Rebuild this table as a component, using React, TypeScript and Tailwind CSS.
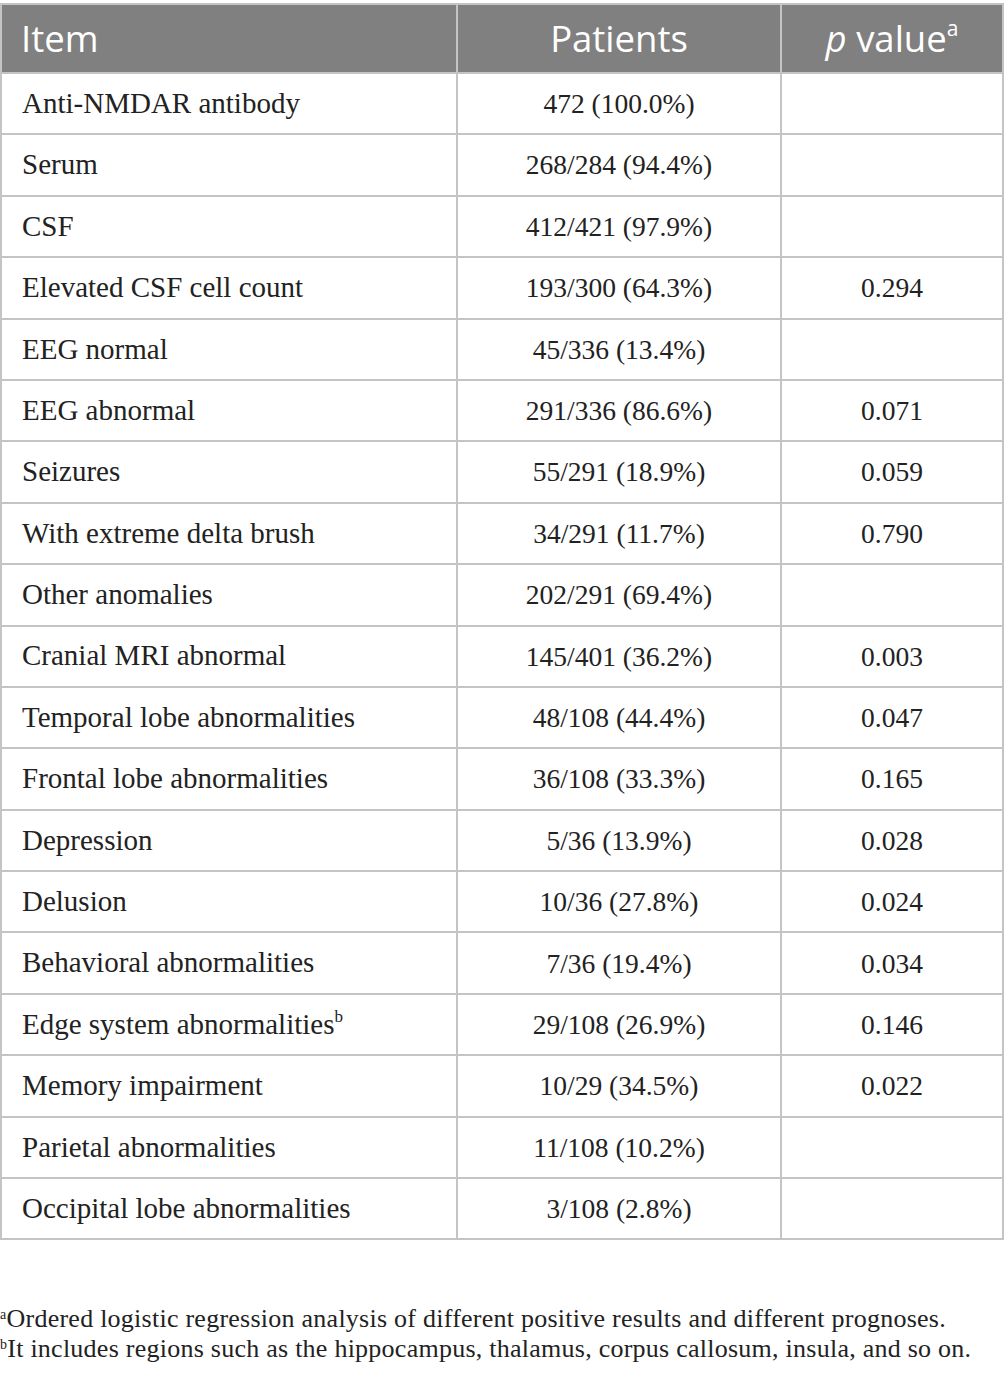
const rows: [string, string, string, string?][] = [
  ['Anti-NMDAR antibody', '472 (100.0%)', ''],
  ['Serum', '268/284 (94.4%)', ''],
  ['CSF', '412/421 (97.9%)', ''],
  ['Elevated CSF cell count', '193/300 (64.3%)', '0.294'],
  ['EEG normal', '45/336 (13.4%)', ''],
  ['EEG abnormal', '291/336 (86.6%)', '0.071'],
  ['Seizures', '55/291 (18.9%)', '0.059'],
  ['With extreme delta brush', '34/291 (11.7%)', '0.790'],
  ['Other anomalies', '202/291 (69.4%)', ''],
  ['Cranial MRI abnormal', '145/401 (36.2%)', '0.003'],
  ['Temporal lobe abnormalities', '48/108 (44.4%)', '0.047'],
  ['Frontal lobe abnormalities', '36/108 (33.3%)', '0.165'],
  ['Depression', '5/36 (13.9%)', '0.028'],
  ['Delusion', '10/36 (27.8%)', '0.024'],
  ['Behavioral abnormalities', '7/36 (19.4%)', '0.034'],
  ['Edge system abnormalities', '29/108 (26.9%)', '0.146', 'b'],
  ['Memory impairment', '10/29 (34.5%)', '0.022'],
  ['Parietal abnormalities', '11/108 (10.2%)', ''],
  ['Occipital lobe abnormalities', '3/108 (2.8%)', ''],
];

export default function App() {
  return (
    <div className="w-[1005px] h-[1379px] bg-white pt-[3px]">
      <table className="w-[1004px] border-collapse border-2 border-[#c4c4c4] table-fixed">
        <colgroup>
          <col className="w-[456px]" />
          <col className="w-[324px]" />
          <col />
        </colgroup>
        <thead>
          <tr className="h-[69px] bg-[#808080] text-white text-[36.5px] font-['Open_Sans',sans-serif]">
            <th className="border-2 border-[#c4c4c4] text-left font-normal pl-[19px]">Item</th>
            <th className="border-2 border-[#c4c4c4] text-center font-normal">Patients</th>
            <th className="border-2 border-[#c4c4c4] text-center font-normal">
              <i>p</i> value<sup className="text-[21px] top-[-0.75em]">a</sup>
            </th>
          </tr>
        </thead>
        <tbody className="font-['Liberation_Serif',serif] text-[#222]">
          {rows.map(([item, pts, p, sup]) => (
            <tr key={item} className="h-[61.4px]">
              <td className="border-2 border-[#c4c4c4] pl-[20px] text-[29px]">
                {item}
                {sup && <sup className="text-[17px] top-[-0.7em]">{sup}</sup>}
              </td>
              <td className="border-2 border-[#c4c4c4] text-center text-[27.5px]">{pts}</td>
              <td className="border-2 border-[#c4c4c4] text-center text-[27.5px]">{p}</td>
            </tr>
          ))}
        </tbody>
      </table>
      <div className="mt-[64px] font-['Liberation_Serif',serif] text-[26px] leading-[30px] text-[#222] tracking-[0.25px]">
        <p><sup className="text-[14px] top-[-0.6em]">a</sup>Ordered logistic regression analysis of different positive results and different prognoses.</p>
        <p><sup className="text-[14px] top-[-0.6em]">b</sup>It includes regions such as the hippocampus, thalamus, corpus callosum, insula, and so on.</p>
      </div>
    </div>
  );
}
